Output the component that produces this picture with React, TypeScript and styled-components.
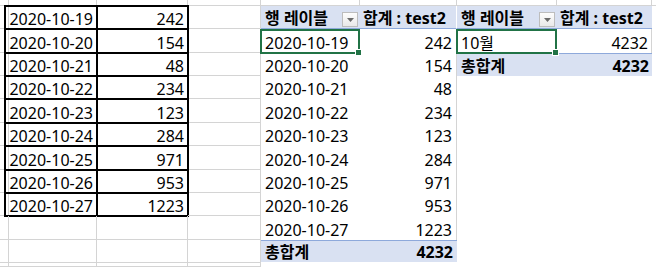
import React from "react";
import styled, { createGlobalStyle, css } from "styled-components";

const GlobalStyle = createGlobalStyle`
  html, body {
    margin: 0;
    padding: 0;
    background: #fff;
  }
  body {
    font-family: "Noto Sans", "Noto Sans CJK KR", sans-serif;
  }
`;

const GRID = "#D4D4D4";
const HEAD_BG = "#D9E1F2";
const HEAD_LINE = "#8EA9DB";
const EXCEL_GREEN = "#217346";

const Sheet = styled.div`
  display: grid;
  grid-template-columns: 5px 92px 91px 73px 99px 97px 100px 95px 4px;
  grid-template-rows: 6px 23px 24px 23px 23px 24px 23px 24px 23px 23px 24px 23px 4px;
  width: 656px;
  height: 267px;
  overflow: hidden;
  font-size: 16px;
  color: #000;
`;

type Kind = "grid" | "blank" | "table" | "head" | "data" | "total";

interface CellProps {
  $kind: Kind;
  $right?: boolean;
  $bold?: boolean;
  $selected?: boolean;
  $short?: boolean;
  $edge?: "white" | "gray";
}

const kindStyles: Record<Kind, ReturnType<typeof css>> = {
  grid: css`
    border-right: 1px solid ${GRID};
    border-bottom: 1px solid ${GRID};
  `,
  blank: css`
    background: #fff;
  `,
  table: css`
    outline: 2px solid #000;
    outline-offset: -1px;
    padding-right: 4px;
  `,
  head: css`
    background: ${HEAD_BG};
    border-bottom: 1px solid ${HEAD_LINE};
  `,
  data: css`
    background: #fff;
  `,
  total: css`
    background: ${HEAD_BG};
    border-top: 1px solid ${HEAD_LINE};
  `,
};

const selectedStyle = css`
  position: relative;

  &::after {
    content: "";
    position: absolute;
    left: -1px;
    top: 0;
    right: 0;
    bottom: -1px;
    border: 2px solid ${EXCEL_GREEN};
    pointer-events: none;
  }

  &::before {
    content: "";
    position: absolute;
    right: -2px;
    bottom: -3px;
    width: 5px;
    height: 5px;
    background: ${EXCEL_GREEN};
    border: 1px solid #fff;
    z-index: 1;
  }
`;

const Cell = styled.div<CellProps>`
  box-sizing: border-box;
  display: flex;
  align-items: flex-end;
  justify-content: ${(p) => (p.$right ? "flex-end" : "flex-start")};
  padding: 0 4px 0 4px;
  line-height: 19px;
  white-space: nowrap;
  overflow: visible;
  font-weight: ${(p) => (p.$bold ? 700 : 400)};
  ${(p) => kindStyles[p.$kind]}
  ${(p) => p.$edge && css`border-right: 1px solid ${p.$edge === "white" ? "#fff" : GRID};`}
  ${(p) => p.$short && css`align-self: start; height: 22px;`}
  ${(p) => p.$selected && selectedStyle}
`;

const HeadCell = styled(Cell)`
  justify-content: space-between;
  padding-right: 2px;
`;

const FilterButton = styled.span`
  box-sizing: border-box;
  width: 16px;
  height: 15px;
  margin-bottom: 1px;
  display: flex;
  align-items: center;
  justify-content: center;
  border: 1px solid #bdbdbd;
  background: linear-gradient(#fdfdfd, #e9e9e9);
`;

function Filter() {
  return (
    <FilterButton>
      <svg width="7" height="4" viewBox="0 0 7 4">
        <path d="M0 0 L7 0 L3.5 4 Z" fill="#6b6b6b" />
      </svg>
    </FilterButton>
  );
}

const dates = [
  "2020-10-19",
  "2020-10-20",
  "2020-10-21",
  "2020-10-22",
  "2020-10-23",
  "2020-10-24",
  "2020-10-25",
  "2020-10-26",
  "2020-10-27",
];
const values = [242, 154, 48, 234, 123, 284, 971, 953, 1223];
const total = values.reduce((a, b) => a + b, 0);

const ROWS = 13;

function renderRow(r: number) {
  const cells: React.ReactNode[] = [];
  const k = (c: number) => `${r}-${c}`;

  // A: narrow leading column
  cells.push(<Cell key={k(0)} $kind="grid" />);

  // B, C: source table
  if (r >= 1 && r <= 9) {
    cells.push(
      <Cell key={k(1)} $kind="table" $right>
        {dates[r - 1]}
      </Cell>
    );
    cells.push(
      <Cell key={k(2)} $kind="table" $right>
        {values[r - 1]}
      </Cell>
    );
  } else {
    cells.push(<Cell key={k(1)} $kind="grid" />);
    cells.push(<Cell key={k(2)} $kind="grid" />);
  }

  // D: empty column
  cells.push(<Cell key={k(3)} $kind="grid" />);

  // E, F: pivot by day
  if (r === 0) {
    cells.push(<Cell key={k(4)} $kind="grid" />);
    cells.push(<Cell key={k(5)} $kind="grid" />);
  } else if (r === 1) {
    cells.push(
      <HeadCell key={k(4)} $kind="head" $bold>
        <span>행 레이블</span>
        <Filter />
      </HeadCell>
    );
    cells.push(
      <Cell key={k(5)} $kind="head" $bold $edge="white" style={{ paddingLeft: 3 }}>
        합계 : test2
      </Cell>
    );
  } else if (r <= 10) {
    cells.push(
      <Cell key={k(4)} $kind="data" $selected={r === 2}>
        {dates[r - 2]}
      </Cell>
    );
    cells.push(
      <Cell key={k(5)} $kind="data" $right $edge="gray">
        {values[r - 2]}
      </Cell>
    );
  } else if (r === 11) {
    cells.push(
      <Cell key={k(4)} $kind="total" $bold $short>
        총합계
      </Cell>
    );
    cells.push(
      <Cell key={k(5)} $kind="total" $bold $right $short>
        {total}
      </Cell>
    );
  } else {
    cells.push(<Cell key={k(4)} $kind="blank" />);
    cells.push(<Cell key={k(5)} $kind="blank" />);
  }

  // G, H: pivot by month
  if (r === 0) {
    cells.push(<Cell key={k(6)} $kind="grid" />);
    cells.push(<Cell key={k(7)} $kind="grid" />);
  } else if (r === 1) {
    cells.push(
      <HeadCell key={k(6)} $kind="head" $bold>
        <span>행 레이블</span>
        <Filter />
      </HeadCell>
    );
    cells.push(
      <Cell key={k(7)} $kind="head" $bold style={{ paddingLeft: 3 }}>
        합계 : test2
      </Cell>
    );
  } else if (r === 2) {
    cells.push(
      <Cell key={k(6)} $kind="data" $selected>
        10월
      </Cell>
    );
    cells.push(
      <Cell key={k(7)} $kind="data" $right $edge="gray" style={{ paddingRight: 3 }}>
        {total}
      </Cell>
    );
  } else if (r === 3) {
    cells.push(
      <Cell key={k(6)} $kind="total" $bold>
        총합계
      </Cell>
    );
    cells.push(
      <Cell key={k(7)} $kind="total" $bold $right style={{ paddingRight: 3 }}>
        {total}
      </Cell>
    );
  } else {
    cells.push(<Cell key={k(6)} $kind="blank" />);
    cells.push(<Cell key={k(7)} $kind="blank" />);
  }

  // trailing sliver
  cells.push(<Cell key={k(8)} $kind={r === 0 ? "grid" : "blank"} />);

  return cells;
}

export default function App() {
  return (
    <>
      <GlobalStyle />
      <Sheet>{Array.from({ length: ROWS }, (_, r) => renderRow(r))}</Sheet>
    </>
  );
}
